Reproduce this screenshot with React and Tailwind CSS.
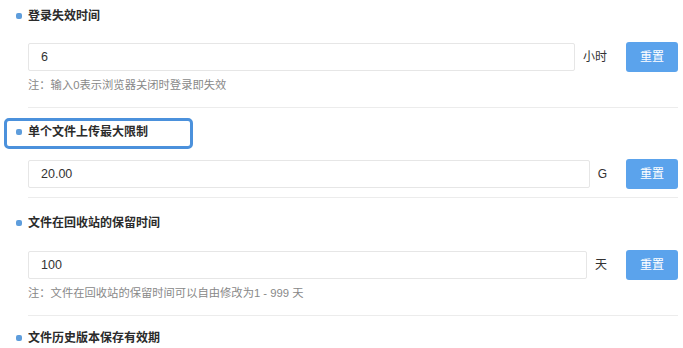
import React from 'react'

const FONT = { fontFamily: '"Liberation Sans", "Noto Sans CJK SC", sans-serif' }

function Title({ text, highlight }) {
  return (
    <div className="relative flex items-center h-5 pl-4">
      {highlight && (
        <span className="absolute left-[4px] top-[-4px] w-[189px] h-[31px] border-[3px] border-[#4b91dc] rounded-[5px]" />
      )}
      <span className="w-[6px] h-[6px] rounded-[2px] bg-[#5e9ddc] mr-[6px]" />
      <span className="text-[12px] font-bold text-[#2b2b2b]">{text}</span>
    </div>
  )
}

function Row({ value, unit }) {
  return (
    <div className="flex items-center">
      <div className="flex-1 h-[28px] border border-[#e6e6e6] rounded-[2px] flex items-center px-3 text-[12.5px] text-[#333]">
        {value}
      </div>
      <span className="ml-2 mr-[19px] text-[12px] text-[#333]">{unit}</span>
      <button className="w-[52px] h-[30px] rounded-[3px] bg-[#5ba3ec] text-white text-[12px]">重置</button>
    </div>
  )
}

export default function App() {
  return (
    <div className="w-[683px] h-[348px] bg-white overflow-hidden pr-[5px]" style={FONT}>
      <div className="pt-[6px]">
        <Title text="登录失效时间" />
        <div className="ml-7 mt-4 pb-[14px] border-b border-[#ececec]">
          <Row value="6" unit="小时" />
          <div className="mt-[5px] h-4 leading-4 text-[11.3px] text-[#888]">注：输入0表示浏览器关闭时登录即失效</div>
        </div>
      </div>

      <div className="pt-[14px]">
        <Title text="单个文件上传最大限制" highlight />
        <div className="ml-7 mt-[17px] pb-2 border-b border-[#ececec]">
          <Row value="20.00" unit="G" />
        </div>
      </div>

      <div className="pt-[15px]">
        <Title text="文件在回收站的保留时间" />
        <div className="ml-7 mt-[17px] pb-[14px] border-b border-[#ececec]">
          <Row value="100" unit="天" />
          <div className="mt-[5px] h-4 leading-4 text-[11.3px] text-[#888]">注：文件在回收站的保留时间可以自由修改为1 - 999 天</div>
        </div>
      </div>

      <div className="pt-[12px]">
        <Title text="文件历史版本保存有效期" />
      </div>
    </div>
  )
}
